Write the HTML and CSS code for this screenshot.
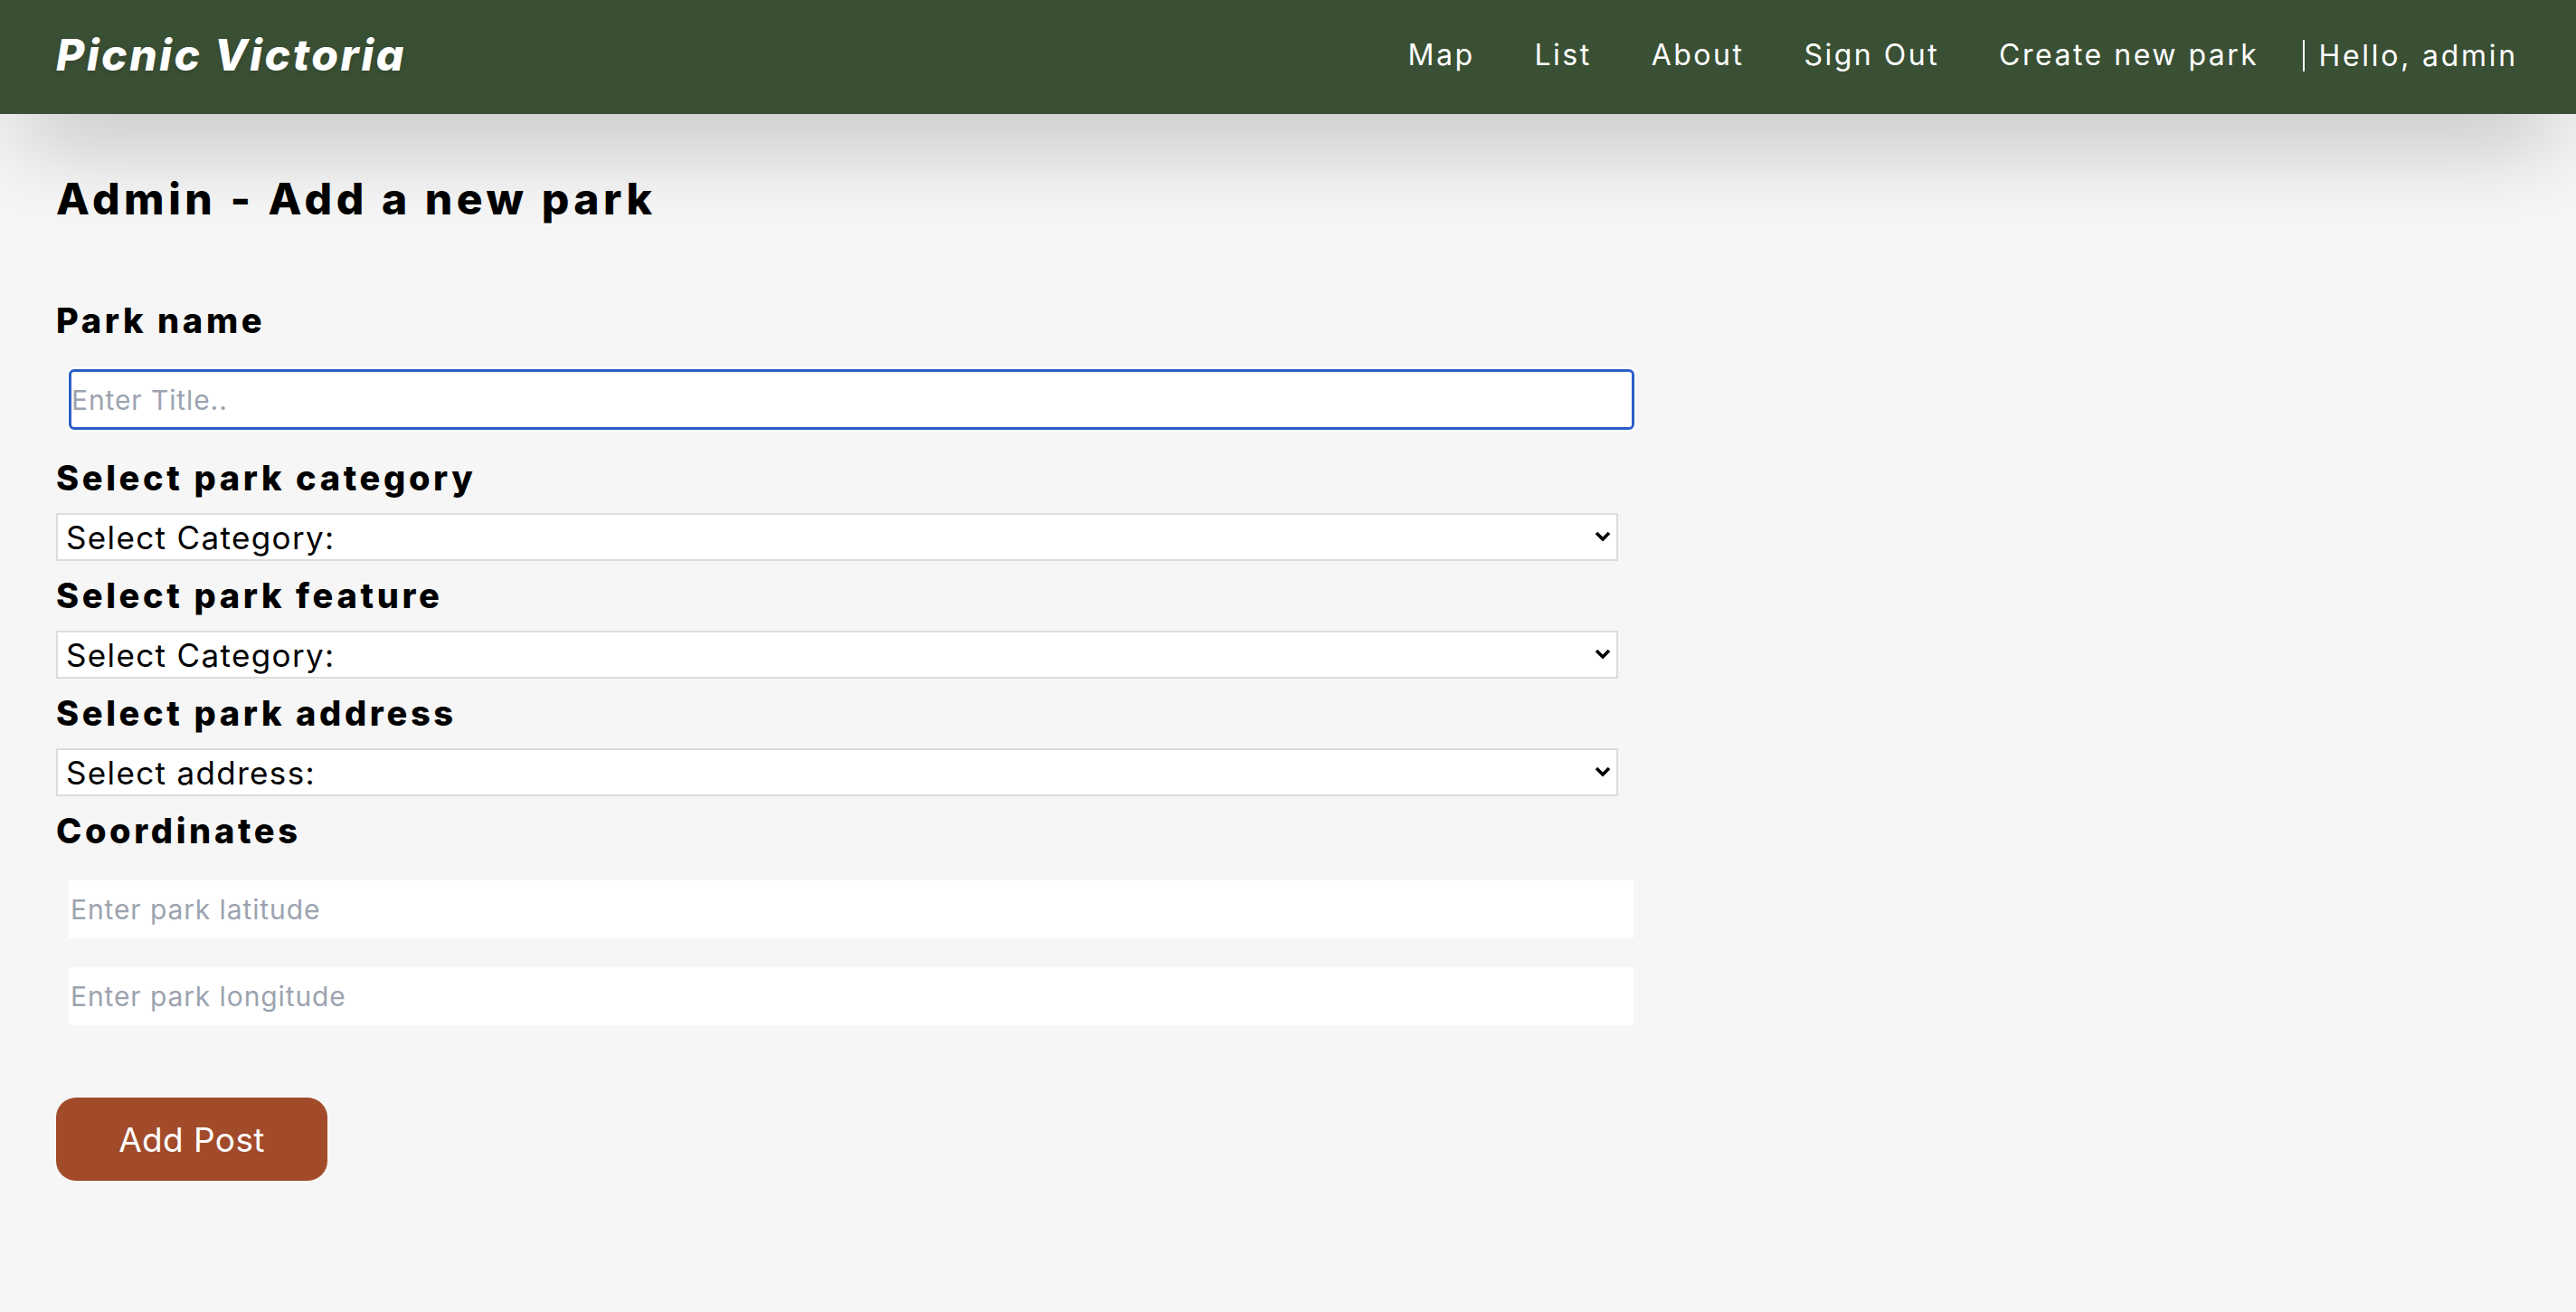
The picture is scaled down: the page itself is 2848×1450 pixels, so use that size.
FILE: index.html
```html
<!DOCTYPE html>
<html lang="en">
<head>
<meta charset="utf-8">
<title>Picnic Victoria - Add a new park</title>
<link rel="stylesheet" href="styles.css">
</head>
<body>
<header class="topbar">
  <a class="logo" href="#">Picnic Victoria</a>
  <nav class="nav">
    <a class="nav-link" href="#">Map</a>
    <a class="nav-link" href="#">List</a>
    <a class="nav-link" href="#">About</a>
    <a class="nav-link" href="#">Sign Out</a>
    <a class="nav-link" href="#">Create new park</a>
    <span class="hello">Hello, admin</span>
  </nav>
</header>
<main class="page">
  <h1 class="title">Admin - Add a new park</h1>
  <form class="form">
    <label class="label label-first">Park name</label>
    <input class="text-input focused" type="text" placeholder="Enter Title..">
    <label class="label label-after-input">Select park category</label>
    <div class="select-wrap">
      <select class="select"><option>Select Category:</option></select>
      <svg class="chevron" viewBox="0 0 18 12" width="18" height="12"><path d="M2 2 L9 9 L16 2" fill="none" stroke="#000" stroke-width="3.6"/></svg>
    </div>
    <label class="label">Select park feature</label>
    <div class="select-wrap">
      <select class="select"><option>Select Category:</option></select>
      <svg class="chevron" viewBox="0 0 18 12" width="18" height="12"><path d="M2 2 L9 9 L16 2" fill="none" stroke="#000" stroke-width="3.6"/></svg>
    </div>
    <label class="label">Select park address</label>
    <div class="select-wrap">
      <select class="select"><option>Select address:</option></select>
      <svg class="chevron" viewBox="0 0 18 12" width="18" height="12"><path d="M2 2 L9 9 L16 2" fill="none" stroke="#000" stroke-width="3.6"/></svg>
    </div>
    <label class="label">Coordinates</label>
    <input class="coord-input coord-first" type="text" placeholder="Enter park latitude">
    <input class="coord-input" type="text" placeholder="Enter park longitude">
    <button class="submit" type="button">Add Post</button>
  </form>
</main>
</body>
</html>
```
FILE: styles.css
```css
* { box-sizing: border-box; }
html, body { margin: 0; padding: 0; }
body {
  background: #f6f6f6;
  font-family: Inter, "Liberation Sans", sans-serif;
  color: #000;
  min-height: 1450px;
}
.topbar {
  height: 126px;
  background: #3a5034;
  display: flex;
  align-items: center;
  justify-content: space-between;
  padding: 0 64px 0 62px;
  box-shadow: 0 50px 100px -24px rgba(0, 0, 0, 0.25);
  position: relative;
}
.logo {
  color: #fff;
  text-decoration: none;
  font-weight: 800;
  font-style: italic;
  font-size: 48px;
  line-height: 48px;
  letter-spacing: 2.6px;
  margin-top: -4px;
  text-shadow: 0 2px 6px rgba(0,0,0,0.15);
}
.nav { display: flex; align-items: center; margin-top: -4px; }
.nav-link {
  color: #fff;
  text-decoration: none;
  font-size: 32px;
  line-height: 40px;
  letter-spacing: 2.5px;
  margin-right: 66px;
}
.nav-link:last-of-type { margin-right: 49px; }
.hello {
  color: #fff;
  font-size: 32px;
  line-height: 35px;
  letter-spacing: 2.75px;
  border-left: 2px solid #fff;
  padding-left: 15px;
}
.page { padding: 64px 0 0 62px; }
.title {
  margin: 0;
  font-size: 48px;
  line-height: 60px;
  font-weight: 800;
  letter-spacing: 4.55px;
}
.form { display: flex; flex-direction: column; align-items: flex-start; }
.label {
  display: block;
  font-size: 38px;
  line-height: 48px;
  font-weight: 800;
  letter-spacing: 3.65px;
  margin: 14px 0 15px;
}
.label-first { margin: 80px 0 30px; }
.label-after-input { margin-top: 29px; }
.text-input {
  width: 1731px;
  height: 67px;
  margin-left: 14px;
  background: #fff;
  border: 3px solid #2c5ec8;
  border-radius: 6px;
  box-shadow: 0 0 0 2px #fff;
  padding: 0;
  font-family: inherit;
  font-size: 30px;
  letter-spacing: 0.9px;
  outline: none;
}
.text-input::placeholder, .coord-input::placeholder { color: #9ca3af; }
.select-wrap { position: relative; width: 1727px; height: 53px; }
.select {
  appearance: none;
  -webkit-appearance: none;
  width: 100%;
  height: 100%;
  background: #fff;
  border: 2px solid #dcdcdc;
  border-radius: 0;
  padding: 0 0 0 9px;
  font-family: inherit;
  font-size: 35px;
  letter-spacing: 1.36px;
  color: #000;
}
.chevron { position: absolute; right: 8px; top: 20px; pointer-events: none; }
.coord-input {
  width: 1730px;
  height: 64px;
  margin: 32px 0 0 14px;
  border: 0;
  background: #fff;
  padding: 0 0 0 2px;
  font-family: inherit;
  font-size: 30px;
  letter-spacing: 0.9px;
  outline: none;
}
.coord-first { margin-top: 16px; }
.submit {
  margin-top: 80px;
  width: 300px;
  height: 92px;
  border: 0;
  border-radius: 22px;
  background: #a24b2b;
  color: #fff;
  font-family: inherit;
  font-size: 37px;
  letter-spacing: 0.4px;
}
```
